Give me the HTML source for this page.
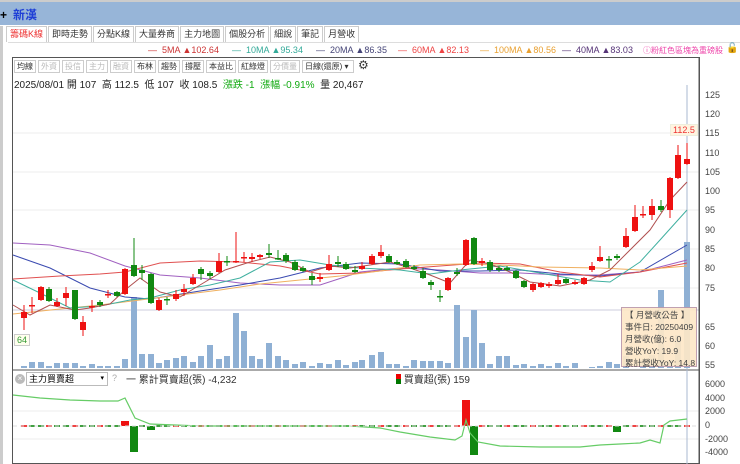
<!DOCTYPE html>
<html><head><meta charset="utf-8"><style>
body{margin:0;width:740px;height:464px;overflow:hidden;background:#fff;font-family:"Liberation Sans","Noto Sans CJK TC",sans-serif;position:relative}
.a{position:absolute;white-space:nowrap}
.top{left:0;top:0;width:740px;height:25px;background:#97b5d8;border-top:2px solid #ccc;box-sizing:border-box}
.tabs{left:6px;top:26px;height:16px;font-size:9px;display:flex}
.tabs span{border:1px solid #ccc;border-bottom:none;padding:1px 3px;margin-right:1px;color:#333;background:#fff;line-height:13px}
.tb{font-size:8px;display:flex;left:14px;top:60px}
.tb span{border:1px solid #ccc;padding:0 2px;margin-right:2px;line-height:11px;color:#333}
.tb span.g{color:#bbb}
.leg{top:45px;font-size:9px}
.ax{font-size:9px;color:#444;left:705px}
</style></head><body>
<div class="a top"></div>
<div class="a" style="left:0;top:8px;font-size:12px;font-weight:bold">+</div>
<div class="a" style="left:13px;top:6px;font-size:12px;color:#1f3fd6;font-weight:bold">新漢</div>
<div class="a" style="left:0;top:26px;width:3px;height:438px;background:#ccc"></div>
<div class="a tabs"><span style="color:#e33">籌碼K線</span><span>即時走勢</span><span>分點K線</span><span>大量券商</span><span>主力地圖</span><span>個股分析</span><span>細說</span><span>筆記</span><span>月營收</span></div>
<div class="a" style="left:8px;top:42px;width:732px;border-top:1px solid #ddd"></div>
<div class="a leg" style="left:148px;color:#c33">— &nbsp;5MA ▲102.64</div>
<div class="a leg" style="left:232px;color:#3a9">— &nbsp;10MA ▲95.34</div>
<div class="a leg" style="left:316px;color:#447">— &nbsp;20MA ▲86.35</div>
<div class="a leg" style="left:398px;color:#e44">— &nbsp;60MA ▲82.13</div>
<div class="a leg" style="left:480px;color:#e9a030">— &nbsp;100MA ▲80.56</div>
<div class="a leg" style="left:562px;color:#537">— &nbsp;40MA ▲83.03</div>
<div class="a" style="left:643px;top:45px;font-size:8px;color:#e4a">ⓘ粉紅色區塊為重磅股</div>
<div class="a" style="left:726px;top:43px;font-size:10px">🔓</div>
<div class="a" style="left:12px;top:57px;width:688px;height:407px;border:1px solid #555;box-sizing:border-box"></div>
<div class="a tb"><span>均線</span><span class="g">外資</span><span class="g">投信</span><span class="g">主力</span><span class="g">融資</span><span>布林</span><span>趨勢</span><span>撐壓</span><span>本益比</span><span>紅綠燈</span><span class="g">分價量</span><span style="width:46px">日線(還原) ▾</span><span style="border:none;font-size:12px;line-height:11px">⚙</span></div>
<div class="a" style="left:14px;top:76px;font-size:10px;color:#222">2025/08/01 開 107 &nbsp;高 112.5 &nbsp;低 107 &nbsp;收 108.5 &nbsp;<span style="color:#1a1">漲跌 -1 &nbsp;漲幅 -0.91%</span> &nbsp;量 20,467</div>
<svg class="a" style="left:0;top:0" width="740" height="464" id="s">
<g stroke="#eee" stroke-width="1">
<line x1="13" x2="699" y1="133" y2="133"/><line x1="13" x2="699" y1="172" y2="172"/><line x1="13" x2="699" y1="210" y2="210"/><line x1="13" x2="699" y1="249" y2="249"/><line x1="13" x2="699" y1="288" y2="288"/>
<line x1="13" x2="699" y1="411" y2="411"/><line x1="13" x2="699" y1="439" y2="439"/>
</g>
<line x1="13" x2="699" y1="310" y2="310" stroke="#ccd" />
<line x1="13" x2="699" y1="370" y2="370" stroke="#555"/>
<line x1="699" x2="699" y1="57" y2="464" stroke="#555"/>
<line x1="687" x2="687" y1="85" y2="464" stroke="#aab8d0"/>
<g id="vol" fill="#8fb0d4"></g>
<g id="ma" fill="none" stroke-width="1">
<polyline stroke="#a060c0" points="13,243 50,245 90,253 125,266 160,275 200,278 240,283 280,285 320,285 360,272 400,268 440,270 480,273 520,273 560,275 600,275 640,272 687,260"/>
<polyline stroke="#3a4ab0" points="13,255 50,268 90,288 125,297 150,299 200,291 240,285 280,278 320,268 360,263 400,264 440,271 480,271 520,270 560,274 600,276 640,272 687,245"/>
<polyline stroke="#e05050" points="13,279 60,276 100,274 125,272 160,263 200,261 240,262 280,266 320,274 360,273 400,269 440,266 480,263 520,264 560,272 600,277 640,272 687,263"/>
<polyline stroke="#f0b060" points="13,314 60,309 100,305 140,300 180,295 220,290 260,284 300,280 340,276 380,271 420,265 460,264 500,265 540,267 600,268 640,270 687,266"/>
<polyline stroke="#40b0a0" points="13,280 40,293 70,308 100,306 130,300 150,298 180,290 210,285 240,278 270,262 300,260 330,265 360,268 400,270 430,274 460,270 500,266 540,273 580,280 610,282 640,262 660,240 687,210"/>
<polyline stroke="#b05050" points="13,305 30,315 50,305 75,310 90,308 110,304 125,290 140,278 160,292 180,297 200,285 225,270 250,262 270,257 290,262 310,272 330,266 350,268 370,265 390,262 410,268 430,275 450,283 470,260 490,264 510,272 530,282 560,286 590,280 610,270 630,250 650,230 670,200 687,182"/>
</g>
<g id="cd"></g>
<g id="ib"></g>
<polyline fill="none" stroke="#6c6" stroke-width="1.2" points="13,395 40,398 70,400 100,401 118,401 125,398 135,418 150,424 200,426 250,426 300,426 350,426 380,428 400,432 430,437 455,440 462,436 466,420 470,433 478,442 500,446 540,447 580,447 600,445 620,444 640,443 650,440 660,443 664,425 670,421 687,419"/>
<line x1="13" x2="699" y1="426" y2="426" stroke="#ddd" stroke-dasharray="4,3"/>
</svg>
<div class="a" style="left:670px;top:124px;font-size:9px;color:#e33;background:#fff4e0;border:1px solid #eed;padding:0 2px">112.5</div>
<div class="a" style="left:14px;top:334px;font-size:9px;color:#393;background:#ffe;border:1px solid #ccc;padding:0 2px">64</div>
<div class="a" style="left:621px;top:307px;width:76px;height:60px;background:#fde8c8;border:1px solid #b9a;font-size:8.5px;line-height:12px;padding:1px 3px;box-sizing:border-box;color:#333;opacity:.92">【 月營收公告 】<br>事件日: 20250409<br>月營收(億): 6.0<br>營收YoY: 19.9<br>累計營收YoY: 14.8</div>
<div class="a ax" style="top:90px">125</div><div class="a ax" style="top:109px">120</div><div class="a ax" style="top:128px">115</div><div class="a ax" style="top:148px">110</div><div class="a ax" style="top:167px">105</div><div class="a ax" style="top:186px">100</div><div class="a ax" style="top:205px">95</div><div class="a ax" style="top:225px">90</div><div class="a ax" style="top:244px">85</div><div class="a ax" style="top:263px">80</div><div class="a ax" style="top:283px">75</div>
<div class="a ax" style="top:322px">65</div><div class="a ax" style="top:341px">60</div><div class="a ax" style="top:360px">55</div>
<div class="a ax" style="top:379px">6000</div><div class="a ax" style="top:393px">4000</div><div class="a ax" style="top:406px">2000</div><div class="a ax" style="top:420px">0</div><div class="a ax" style="top:434px">-2000</div><div class="a ax" style="top:447px">-4000</div>
<div class="a" style="left:15px;top:374px;width:10px;height:10px;border-radius:5px;background:#bbb;color:#fff;font-size:8px;text-align:center;line-height:10px">×</div>
<div class="a" style="left:26px;top:372px;width:78px;height:12px;border:1px solid #bbb;font-size:9px;line-height:12px;padding-left:2px">主力買賣超<span style="float:right;margin-right:3px;font-size:7px">▾</span></div>
<div class="a" style="left:112px;top:373px;font-size:9px;color:#aaa">?</div>
<div class="a" style="left:126px;top:371px;font-size:10px;color:#333">一 累計買賣超(張) -4,232</div>
<div class="a" style="left:396px;top:371px;font-size:10px;color:#333"><span style="display:inline-block;width:5px;height:10px;background:linear-gradient(#e00 50%,#070 50%);vertical-align:-1px"></span> 買賣超(張) 159</div>
<script>
var R="#ee1111",G="#118811";
var c=[[24,312,318,305,330,R],[32,305,306,297,313,R],[41,287,300,286,301,R],[49,289,301,287,302,G],[57,302,306,298,307,R],[66,293,298,287,306,R],[75,290,319,290,320,G],[83,322,330,316,336,R],[92,306,307,300,312,R],[100,302,305,300,307,G],[108,294,295,290,298,R],[117,292,296,291,297,G],[125,269,294,268,295,R],[134,265,276,238,277,G],[142,270,273,265,280,G],[151,274,303,273,304,G],[159,300,310,298,311,R],[167,299,300,297,305,G],[176,294,299,290,301,R],[184,289,292,284,296,R],[193,278,284,274,285,R],[201,269,274,267,280,G],[210,273,276,271,279,G],[219,261,272,253,273,R],[227,261,262,256,266,G],[236,261,262,232,263,R],[244,257,258,252,262,R],[252,257,259,253,262,R],[260,255,257,254,259,R],[269,253,255,244,258,G],[278,258,259,250,260,G],[286,255,261,253,263,G],[295,262,270,260,271,G],[303,268,271,266,272,G],[312,276,280,273,285,G],[320,277,279,273,282,R],[329,264,270,255,271,R],[338,262,264,256,267,G],[346,264,269,262,270,G],[355,270,272,266,273,G],[362,266,269,262,270,R],[372,256,264,254,265,R],[381,252,256,245,258,R],[389,256,262,254,263,G],[397,262,264,260,265,G],[406,261,267,259,268,G],[414,267,269,265,270,G],[423,271,278,268,279,G],[431,282,285,280,290,G],[440,296,297,290,302,G],[448,278,290,277,291,R],[457,272,274,268,276,G],[466,240,265,239,266,R],[474,238,264,237,265,G],[482,261,263,258,266,R],[490,262,270,260,272,G],[499,268,270,266,272,G],[507,268,270,266,271,G],[516,271,278,270,279,G],[524,281,287,280,288,G],[533,284,290,283,292,R],[541,283,287,282,288,R],[549,284,286,282,288,R],[558,280,284,274,285,R],[566,279,283,278,284,G],[575,282,284,280,285,R],[584,278,284,277,285,R],[592,266,270,262,272,R],[600,257,261,246,262,R],[609,259,260,256,268,G],[617,256,258,254,260,G],[626,236,247,228,248,R],[635,217,231,205,232,R],[643,214,215,206,218,R],[652,206,215,199,220,R],[661,206,210,200,212,G],[670,178,210,177,218,R],[678,155,178,145,179,R],[687,159,164,143,165,R]];
var s="";c.forEach(function(d){var x=d[0],t=Math.min(d[1],d[2]),h=Math.max(1.5,Math.abs(d[2]-d[1]));s+='<line x1="'+x+'" x2="'+x+'" y1="'+d[3]+'" y2="'+d[4]+'" stroke="'+d[5]+'"/><rect x="'+(x-3)+'" y="'+t+'" width="6" height="'+h+'" fill="'+d[5]+'"/>';});
document.getElementById("cd").innerHTML=s;
var v=[366,362,362,366,363,363,363,366,364,366,366,366,359,297,354,354,363,360,358,356,362,356,345,359,356,313,331,356,359,343,356,360,364,362,366,363,364,360,365,362,360,355,352,364,364,366,360,361,361,361,363,305,337,310,343,364,356,356,365,364,366,364,366,363,366,363,368,367,366,362,364,356,368,360,355,290,360,335,242,358];
var vs="";c.forEach(function(d,i){var t=v[i]||362;vs+='<rect x="'+(d[0]-3)+'" y="'+t+'" width="6" height="'+(368-t)+'"/>';});
document.getElementById("vol").innerHTML=vs;
var ib="",bars={134:[426,452,G],466:[400,426,R],474:[426,455,G],668:[395,426,R],125:[421,426,R],151:[426,430,G],158:[426,431,G],625:[416,426,R],617:[426,432,G],631:[421,426,R],677:[421,426,R]};
c.forEach(function(d,i){var b=bars[d[0]];if(b){ib+='<rect x="'+(d[0]-4)+'" y="'+b[0]+'" width="8" height="'+(b[1]-b[0])+'" fill="'+b[2]+'"/>';}else{ib+='<rect x="'+(d[0]-3)+'" y="425" width="6" height="2" fill="'+(i%3?G:R)+'" opacity=".8"/>';}});
document.getElementById("ib").innerHTML=ib;
</script>
</body></html>
